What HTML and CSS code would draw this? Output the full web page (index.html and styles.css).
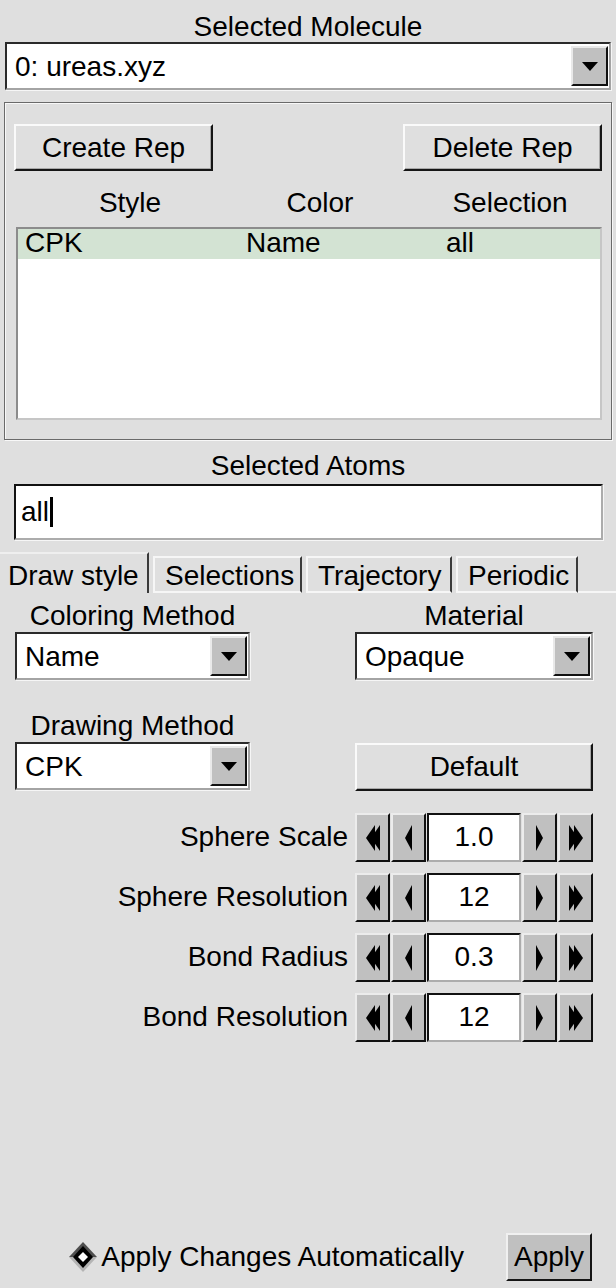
FILE: index.html
```html
<!DOCTYPE html>
<html>
<head>
<meta charset="utf-8">
<link rel="stylesheet" href="styles.css">
</head>
<body>
<div class="app">
  <div class="title title-mol">Selected Molecule</div>
  <div class="combo combo-mol"><span class="val">0: ureas.xyz</span><span class="arrow"></span></div>

  <div class="frame">
    <div class="btnrow">
      <div class="btn">Create Rep</div>
      <div class="btn">Delete Rep</div>
    </div>
    <div class="cols"><span>Style</span><span>Color</span><span>Selection</span></div>
    <div class="list">
      <div class="row sel"><span>CPK</span><span>Name</span><span>all</span></div>
    </div>
  </div>

  <div class="title title-atoms">Selected Atoms</div>
  <div class="entry entry-atoms">all<span class="caret"></span></div>

  <div class="tabs">
    <div class="tab active">Draw style</div>
    <div class="tab">Selections</div>
    <div class="tab">Trajectory</div>
    <div class="tab">Periodic</div>
    <div class="tab-rest"></div>
  </div>

  <div class="pane">
    <div class="grid">
      <div class="lbl lbl-first">Coloring Method</div>
      <div class="lbl lbl-first">Material</div>
      <div class="combo"><span class="val">Name</span><span class="arrow"></span></div>
      <div class="combo"><span class="val">Opaque</span><span class="arrow"></span></div>
      <div class="lbl lbl-second">Drawing Method</div>
      <div class="lbl lbl-second"></div>
      <div class="combo"><span class="val">CPK</span><span class="arrow"></span></div>
      <div class="btn btn-default">Default</div>
    </div>

    <div class="spins">
      <div class="spin-row">
        <span class="spin-lbl">Sphere Scale</span>
        <span class="sbtn"><svg width="14" height="26" viewBox="0 0 14 26"><polygon points="0,13 9,0 9,26"/><polygon points="5,13 14,0 14,26"/></svg></span>
        <span class="sbtn"><svg width="7" height="26" viewBox="0 0 7 26"><polygon points="0,13 7,0 7,26"/></svg></span>
        <span class="sval">1.0</span>
        <span class="sbtn"><svg width="7" height="26" viewBox="0 0 7 26"><polygon points="7,13 0,0 0,26"/></svg></span>
        <span class="sbtn"><svg width="14" height="26" viewBox="0 0 14 26"><polygon points="14,13 5,0 5,26"/><polygon points="9,13 0,0 0,26"/></svg></span>
      </div>
      <div class="spin-row">
        <span class="spin-lbl">Sphere Resolution</span>
        <span class="sbtn"><svg width="14" height="26" viewBox="0 0 14 26"><polygon points="0,13 9,0 9,26"/><polygon points="5,13 14,0 14,26"/></svg></span>
        <span class="sbtn"><svg width="7" height="26" viewBox="0 0 7 26"><polygon points="0,13 7,0 7,26"/></svg></span>
        <span class="sval">12</span>
        <span class="sbtn"><svg width="7" height="26" viewBox="0 0 7 26"><polygon points="7,13 0,0 0,26"/></svg></span>
        <span class="sbtn"><svg width="14" height="26" viewBox="0 0 14 26"><polygon points="14,13 5,0 5,26"/><polygon points="9,13 0,0 0,26"/></svg></span>
      </div>
      <div class="spin-row">
        <span class="spin-lbl">Bond Radius</span>
        <span class="sbtn"><svg width="14" height="26" viewBox="0 0 14 26"><polygon points="0,13 9,0 9,26"/><polygon points="5,13 14,0 14,26"/></svg></span>
        <span class="sbtn"><svg width="7" height="26" viewBox="0 0 7 26"><polygon points="0,13 7,0 7,26"/></svg></span>
        <span class="sval">0.3</span>
        <span class="sbtn"><svg width="7" height="26" viewBox="0 0 7 26"><polygon points="7,13 0,0 0,26"/></svg></span>
        <span class="sbtn"><svg width="14" height="26" viewBox="0 0 14 26"><polygon points="14,13 5,0 5,26"/><polygon points="9,13 0,0 0,26"/></svg></span>
      </div>
      <div class="spin-row">
        <span class="spin-lbl">Bond Resolution</span>
        <span class="sbtn"><svg width="14" height="26" viewBox="0 0 14 26"><polygon points="0,13 9,0 9,26"/><polygon points="5,13 14,0 14,26"/></svg></span>
        <span class="sbtn"><svg width="7" height="26" viewBox="0 0 7 26"><polygon points="0,13 7,0 7,26"/></svg></span>
        <span class="sval">12</span>
        <span class="sbtn"><svg width="7" height="26" viewBox="0 0 7 26"><polygon points="7,13 0,0 0,26"/></svg></span>
        <span class="sbtn"><svg width="14" height="26" viewBox="0 0 14 26"><polygon points="14,13 5,0 5,26"/><polygon points="9,13 0,0 0,26"/></svg></span>
      </div>
    </div>
  </div>

  <div class="footer">
    <span class="radio"><svg width="30" height="32" viewBox="0 0 30 32"><polygon points="15,1 29,16 1,16" fill="#4e4e4e"/><polygon points="1,16 29,16 15,31" fill="#b4b4b4"/><polygon points="15,5 25,16 15,27 5,16" fill="#000"/><polygon points="15,11 20,16 15,21 10,16" fill="#fff"/></svg></span>
    <span class="radio-lbl">Apply Changes Automatically</span>
    <span class="btn btn-apply">Apply</span>
  </div>
</div>
</body>
</html>
```

FILE: styles.css
```css
* { box-sizing: border-box; }
html, body { margin: 0; padding: 0; }
body {
  background: #dfdfdf;
  font-family: "Liberation Sans", Arial, Helvetica, sans-serif;
  font-size: 28px;
  color: #000;
  width: 616px;
  height: 1288px;
  overflow: hidden;
}
.app { display: flex; flex-direction: column; height: 1288px; }

.title { text-align: center; line-height: 32px; }
.title-mol { padding-top: 11px; height: 42px; }
.title-atoms { padding-top: 10px; height: 44px; margin-top: 0; }

/* combobox */
.combo {
  display: flex;
  align-items: stretch;
  background: #fff;
  height: 48px;
  padding: 2px 1px 2px 0;
  border: 2px solid;
  border-color: #2a2a2a #a4a4a4 #a4a4a4 #2a2a2a;
  box-shadow: 1px 1px 0 #f6f6f6;
}
.combo-mol { margin: 0 5px 0 5px; }
.combo .val { flex: 1; line-height: 42px; padding-left: 8px; white-space: nowrap; }
.arrow {
  width: 37px;
  background: #c0c0c0;
  border: 2px solid;
  border-color: #e9e9e9 #111 #111 #e9e9e9;
  display: flex;
  align-items: center;
  justify-content: center;
}
.arrow::after {
  content: "";
  border-left: 8px solid transparent;
  border-right: 8px solid transparent;
  border-top: 9px solid #000;
}

/* buttons */
.btn {
  background: #dfdfdf;
  border: 2px solid;
  border-color: #fafafa #151515 #151515 #fafafa;
  box-shadow: inset -1px -1px 0 #a8a8a8;
  display: flex;
  align-items: center;
  justify-content: center;
  white-space: nowrap;
}

/* rep frame */
.frame {
  margin: 12px 4px 0 4px;
  height: 338px;
  border: 1px solid #6a6a6a;
  box-shadow: inset 1px 1px 0 #f8f8f8, 1px 1px 0 #f8f8f8;
  padding: 0 9px;
}
.btnrow { display: flex; justify-content: space-between; margin-top: 21px; }
.btnrow .btn { width: 199px; height: 47px; }
.cols {
  display: grid;
  grid-template-columns: 190px 190px 190px;
  padding: 16px 0 8px 21px;
  line-height: 32px;
  text-align: center;
}
.list {
  margin: 0 0 0 2px;
  height: 193px;
  background: #fff;
  border: 2px solid;
  border-color: #8c8c8c #c6c6c6 #c6c6c6 #8c8c8c;
}
.row {
  display: grid;
  grid-template-columns: 221px 200px 1fr;
  height: 30px;
  line-height: 28px;
  padding-left: 7px;
}
.row.sel { background: #d3e3d3; }

/* entry */
.entry {
  background: #fff;
  border: 2px solid;
  border-color: #111 #acacac #acacac #111;
  box-shadow: 1px 1px 0 #f6f6f6;
}
.entry-atoms {
  margin: 0 13px 0 14px;
  height: 56px;
  line-height: 52px;
  padding-left: 5px;
  display: flex;
  align-items: center;
}
.caret { display: inline-block; width: 3px; height: 30px; background: #000; margin-left: 1px; }

/* tabs */
.tabs { display: flex; margin-top: 12px; height: 41px; align-items: stretch; }
.tab {
  padding: 0 8px 0 8px;
  line-height: 36px;
  border-top: 2px solid #f6f6f6;
  border-left: 2px solid #f6f6f6;
  border-right: 2px solid #3a3a3a;
  border-bottom: 2px solid #f6f6f6;
  margin-top: 4px;
  margin-left: 4px;
  white-space: nowrap;
}
.tab.active {
  margin-top: 0;
  margin-left: 0;
  border-top: 2px solid #efefef;
  border-left: none;
  border-bottom: none;
  padding: 4px 9px 0 8px;
  width: 149px;
}
.tab:nth-child(2) { width: 149px; padding-left: 10px; }
.tab:nth-child(3) { width: 146px; padding-left: 10px; }
.tab:nth-child(4) { width: 122px; padding-left: 10px; }
.tab-rest { flex: 1; border-bottom: 2px solid #f6f6f6; }

/* pane */
.pane { padding: 0 23px 0 15px; }
.grid {
  display: grid;
  grid-template-columns: 235px 238px;
  column-gap: 105px;
}
.lbl { text-align: center; line-height: 32px; white-space: nowrap; }
.lbl-first { padding-top: 7px; height: 39px; }
.lbl-second { padding-top: 30px; height: 62px; }
.btn-default { height: 48px; margin-top: 1px; }

.spins { display: flex; flex-direction: column; gap: 11px; margin-top: 22px; }
.spin-row { display: flex; justify-content: flex-end; align-items: stretch; height: 49px; gap: 1px; }
.spin-lbl { line-height: 47px; margin-right: 6px; white-space: nowrap; }
.sbtn {
  width: 35px;
  background: #c0c0c0;
  border: 2px solid;
  border-color: #ececec #111 #111 #ececec;
  display: flex;
  align-items: center;
  justify-content: center;
}
.sbtn svg { fill: #000; display: block; }
.sval {
  width: 94px;
  background: #fff;
  border: 2px solid;
  border-color: #111 #acacac #acacac #111;
  text-align: center;
  line-height: 43px;
}

/* footer */
.footer {
  margin-top: auto;
  margin-bottom: 7px;
  display: flex;
  align-items: center;
  padding-right: 24px;
  justify-content: flex-end;
  height: 48px;
}
.radio { display: flex; align-items: center; margin-right: 3px; }
.radio svg { display: block; }
.radio-lbl { white-space: nowrap; }
.btn-apply {
  margin-left: 42px;
  width: 86px;
  height: 48px;
  background: #c0c0c0;
  border-color: #f0f0f0 #151515 #151515 #f0f0f0;
  box-shadow: none;
}
```
